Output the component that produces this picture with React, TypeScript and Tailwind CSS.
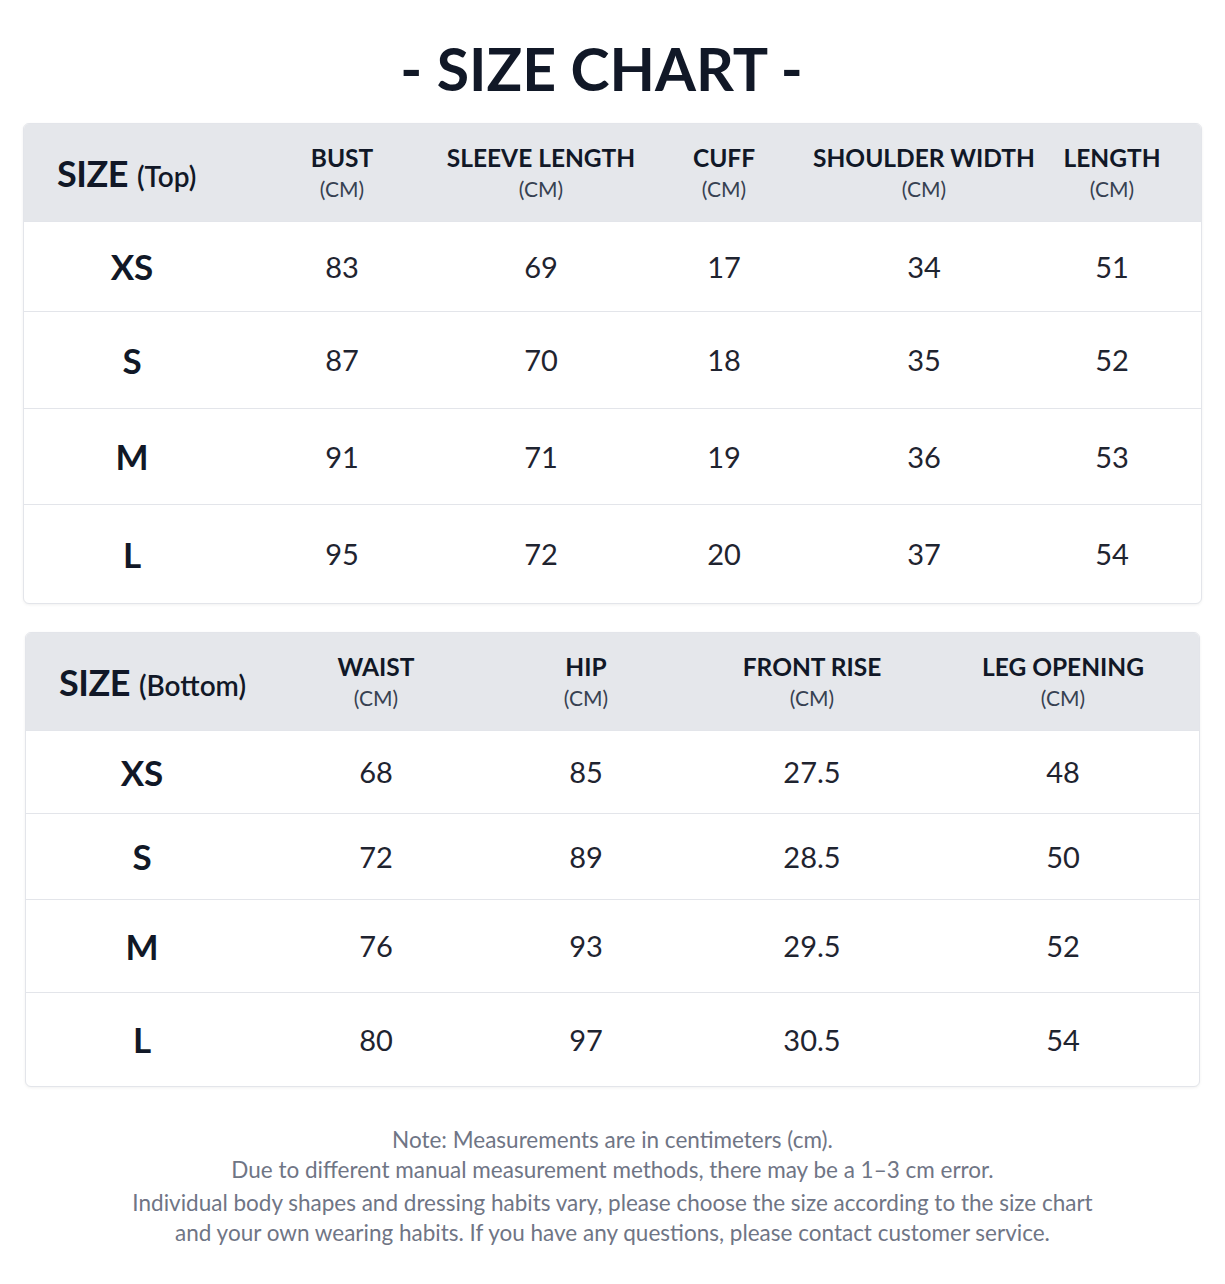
const topCols = ["BUST", "SLEEVE LENGTH", "CUFF", "SHOULDER WIDTH", "LENGTH"];
const topRows = [
  { size: "XS", values: ["83", "69", "17", "34", "51"], h: 90 },
  { size: "S", values: ["87", "70", "18", "35", "52"], h: 97 },
  { size: "M", values: ["91", "71", "19", "36", "53"], h: 96 },
  { size: "L", values: ["95", "72", "20", "37", "54"], h: 99 },
];

const bottomCols = ["WAIST", "HIP", "FRONT RISE", "LEG OPENING"];
const bottomRows = [
  { size: "XS", values: ["68", "85", "27.5", "48"], h: 83 },
  { size: "S", values: ["72", "89", "28.5", "50"], h: 86 },
  { size: "M", values: ["76", "93", "29.5", "52"], h: 93 },
  { size: "L", values: ["80", "97", "30.5", "54"], h: 94 },
];

type Row = { size: string; values: string[]; h: number };

function SizeTable({
  title,
  sub,
  cols,
  rows,
  grid,
  className,
}: {
  title: string;
  sub: string;
  cols: string[];
  rows: Row[];
  grid: string;
  className: string;
}) {
  return (
    <div className={`overflow-hidden rounded-md border border-[#e3e5ea] bg-white shadow-[0_1px_3px_rgba(0,0,0,0.06)] ${className}`}>
      <div className={`grid ${grid} h-[97px] items-center bg-[#e5e7eb]`}>
        <div className="pl-[33px] whitespace-nowrap">
          <span className="text-[36px] font-bold tracking-[-0.5px] text-[#111827]">{title}</span>
          <span className="ml-[9px] text-[28px] font-semibold text-[#111827]">{sub}</span>
        </div>
        {cols.map((c) => (
          <div key={c} className="flex flex-col items-center leading-[31px] whitespace-nowrap">
            <span className="text-[24.5px] font-bold text-[#111827]">{c}</span>
            <span className="text-[21px] text-[#374151]">(CM)</span>
          </div>
        ))}
      </div>
      {rows.map((r) => (
        <div
          key={r.size}
          className={`grid ${grid} items-center border-t border-[#e3e5ea]`}
          style={{ height: r.h }}
        >
          <div className="text-center text-[35px] font-bold text-[#111827]">{r.size}</div>
          {r.values.map((v, i) => (
            <div key={i} className="text-center text-[29px] text-[#1f2430]">
              {v}
            </div>
          ))}
        </div>
      ))}
    </div>
  );
}

export default function App() {
  return (
    <div className="min-h-[1284px] w-[1225px] bg-white pt-[29px] font-['Lato',sans-serif]">
      <h1 className="text-center text-[59px] font-bold leading-[80px] text-[#111827] pr-[22px]">
        - SIZE CHART -
      </h1>

      <SizeTable
        title="SIZE"
        sub="(Top)"
        cols={topCols}
        rows={topRows}
        grid="grid-cols-[216px_204px_194px_172px_228px_148px]"
        className="mx-[23px] mt-[14px]"
      />

      <SizeTable
        title="SIZE"
        sub="(Bottom)"
        cols={bottomCols}
        rows={bottomRows}
        grid="grid-cols-[232px_236px_184px_268px_234px]"
        className="mx-[25px] mt-[28px]"
      />

      <div className="mt-[38px] text-center text-[22.5px] leading-[30px] text-[#6f7585]">
        <p>Note: Measurements are in centimeters (cm).</p>
        <p>Due to different manual measurement methods, there may be a 1–3 cm error.</p>
        <p className="mt-[3px]">
          Individual body shapes and dressing habits vary, please choose the size according to the size chart
        </p>
        <p>and your own wearing habits. If you have any questions, please contact customer service.</p>
      </div>
    </div>
  );
}
